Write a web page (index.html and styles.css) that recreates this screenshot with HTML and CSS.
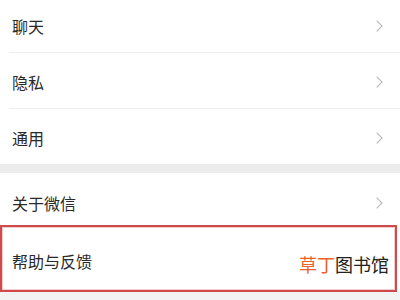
FILE: index.html
```html
<!DOCTYPE html>
<html lang="zh-CN">
<head>
<meta charset="utf-8">
<link rel="stylesheet" href="styles.css">
</head>
<body>
<div class="page">
  <div class="group group-first">
    <div class="row row-1"><span class="label">聊天</span><span class="chev"></span></div>
    <div class="sep"></div>
    <div class="row"><span class="label">隐私</span><span class="chev"></span></div>
    <div class="sep"></div>
    <div class="row"><span class="label">通用</span><span class="chev"></span></div>
  </div>
  <div class="gap"></div>
  <div class="group">
    <div class="row row-4"><span class="label">关于微信</span><span class="chev"></span></div>
    <div class="highlight">
      <div class="row row-5"><span class="label">帮助与反馈</span><span class="chev"></span></div>
      <div class="watermark"><span class="wm-orange">草丁</span><span class="wm-dark">图书馆</span></div>
    </div>
  </div>
</div>
</body>
</html>
```
FILE: styles.css
```css
html, body {
  margin: 0;
  padding: 0;
}
body {
  width: 400px;
  height: 300px;
  overflow: hidden;
  background: #f3f3f3;
  font-family: "Noto Sans CJK SC", "Noto Sans", sans-serif;
  color: #2a2a2a;
}
.page {
  display: flex;
  flex-direction: column;
}
.group {
  background: #fff;
  display: flex;
  flex-direction: column;
}
.group-first {
  margin-top: -3px;
}
.row {
  height: 55px;
  box-sizing: border-box;
  display: flex;
  align-items: center;
  justify-content: space-between;
  padding: 3px 18px 0 12px;
  font-size: 16px;
}
.row-4 {
  height: 52px;
  padding-top: 8px;
}
.label {
  line-height: 1;
  letter-spacing: 0;
}
.sep {
  height: 1px;
  margin-left: 9px;
  background: #efefef;
}
.gap {
  height: 9px;
  background: #ececec;
}
.chev {
  width: 7px;
  height: 7px;
  border-top: 1.5px solid #b5b5b5;
  border-right: 1.5px solid #b5b5b5;
  transform: rotate(45deg);
  margin-right: 1px;
}
.highlight {
  position: relative;
  margin-right: 3px;
  border: 2px solid #cf4a4a;
  box-shadow: inset 0 0 0 1px #f4cccc;
  background: #fff;
}
.row-5 {
  height: 63px;
  padding: 5px 15px 0 10px;
}
.row-5 .chev {
  border-color: #dcdcdc;
}
.watermark {
  position: absolute;
  right: 6px;
  top: 28px;
  font-size: 18px;
  line-height: 1;
  letter-spacing: 0;
}
.wm-orange {
  color: #e8622a;
}
.wm-dark {
  color: #222;
}
```
